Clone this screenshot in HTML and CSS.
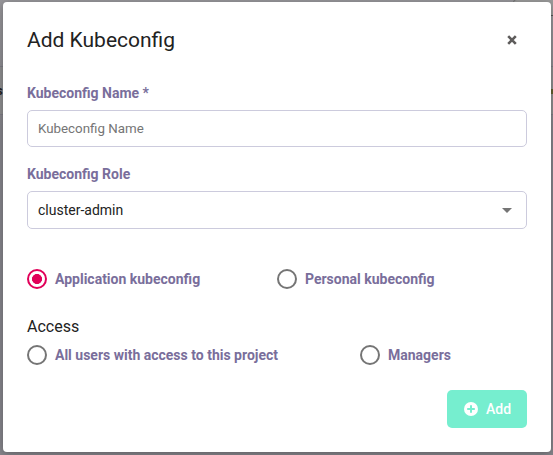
FILE: index.html
```
<!DOCTYPE html>
<html lang="en">
<head>
<meta charset="utf-8">
<title>Add Kubeconfig</title>
<link rel="stylesheet" href="styles.css">
</head>
<body>
<div class="backdrop">
  <span class="page-row"></span>
  <span class="page-card"></span>
  <span class="page-text">s</span>
  <span class="page-badge"></span>
</div>
<main class="modal" role="dialog" aria-labelledby="title">
  <header class="header">
    <h1 class="title" id="title">Add Kubeconfig</h1>
    <button class="close" type="button" aria-label="Close"><svg width="10" height="10" viewBox="0 0 10 10"><path d="M1.2 1.2 8.8 8.8M8.8 1.2 1.2 8.8" stroke="#5e5c5b" stroke-width="2.6"/></svg></button>
  </header>
  <label class="label" for="name">Kubeconfig Name *</label>
  <input class="control" id="name" type="text" placeholder="Kubeconfig Name">
  <div class="label role-label">Kubeconfig Role</div>
  <div class="control select"><span>cluster-admin</span><svg width="10" height="5" viewBox="0 0 10 5"><path d="M0 0h10L5 5z" fill="#757575"/></svg></div>
  <div class="options kind">
    <label class="option"><input class="radio" type="radio" name="kind" checked>Application kubeconfig</label>
    <label class="option"><input class="radio" type="radio" name="kind">Personal kubeconfig</label>
  </div>
  <h2 class="access-title">Access</h2>
  <div class="options access">
    <label class="option"><input class="radio" type="radio" name="access">All users with access to this project</label>
    <label class="option"><input class="radio" type="radio" name="access">Managers</label>
  </div>
  <footer class="footer">
    <button class="add" type="button"><svg width="14" height="14" viewBox="0 0 14 14"><circle cx="7" cy="7" r="7" fill="#fff"/><path d="M7 3.2v7.6M3.2 7h7.6" stroke="#76eecf" stroke-width="2"/></svg><span>Add</span></button>
  </footer>
</main>
</body>
</html>
```
FILE: styles.css
```
* { box-sizing: border-box; }
body {
  margin: 0;
  height: 455px;
  padding: 2px 2px 3px 3px;
  overflow: hidden;
  background: #8c8b91;
  font-family: Roboto, sans-serif;
  font-size: 14px;
  color: #222;
}
.backdrop {
  position: absolute;
  inset: 0;
  overflow: hidden;
  background: linear-gradient(#98979b, #87868c 130px);
}
.page-row {
  position: absolute;
  top: 66px;
  left: 0;
  right: 0;
  height: 49px;
  background: #8f8f90;
  border: solid #7f7e87;
  border-width: 1px 0;
}
.page-card {
  position: absolute;
  top: -1px;
  left: 513px;
  width: 50px;
  height: 17px;
  background: #9b9b9b;
  border: 1px solid #777;
  border-bottom-color: #555;
  border-radius: 4px 0 0 0;
}
.page-text {
  position: absolute;
  top: 83px;
  left: -4px;
  font-size: 13px;
  font-weight: 700;
}
.page-badge {
  position: absolute;
  top: 89px;
  left: 551px;
  width: 5px;
  height: 5px;
  background: #62602f;
}
.modal {
  position: relative;
  display: flex;
  flex-direction: column;
  height: 450px;
  padding: 0 24px;
  background: #fff;
  border-radius: 4px;
  box-shadow: 0 2px 10px rgba(0, 0, 0, .3);
}
.header {
  display: flex;
  align-items: center;
  justify-content: space-between;
  height: 76px;
}
.title {
  margin: 0;
  font-size: 21px;
  font-weight: 400;
}
.close {
  display: flex;
  padding: 0;
  margin-right: 10px;
  border: 0;
  background: none;
}
.label {
  height: 27px;
  margin-top: 5px;
  line-height: 20px;
  font-weight: 700;
  color: #796e9b;
}
.role-label { margin-top: 17px; }
.control {
  width: 100%;
  height: 37px;
  padding: 0 10px;
  border: 1px solid #cccbdd;
  border-radius: 5px;
  background: #fff;
  font: 400 13.333px Roboto, sans-serif;
  color: #222;
}
.control::placeholder { color: #757575; opacity: 1; }
.select {
  display: flex;
  align-items: center;
  justify-content: space-between;
  height: 38px;
  padding-right: 14px;
  font-size: 14px;
}
.options { display: grid; }
.kind {
  grid-template-columns: 250px 1fr;
  margin-top: 40px;
}
.access { grid-template-columns: 333px 1fr; }
.option {
  display: flex;
  align-items: center;
  gap: 8px;
  height: 20px;
  font-weight: 700;
  color: #796e9b;
}
.radio {
  appearance: none;
  width: 20px;
  height: 20px;
  margin: 0;
  border: 2px solid #757575;
  border-radius: 50%;
}
.radio:checked {
  border-color: #e10059;
  background: radial-gradient(circle, #e10059 4.7px, transparent 5.3px);
}
.access-title {
  margin: 28px 0 8px;
  font-size: 16px;
  line-height: 20px;
  font-weight: 400;
}
.footer {
  display: flex;
  justify-content: flex-end;
  margin-top: 25px;
}
.add {
  display: flex;
  align-items: center;
  justify-content: center;
  gap: 8px;
  width: 80px;
  height: 38px;
  padding: 0 0 0 1px;
  border: 0;
  border-radius: 5px;
  background: #76eecf;
  font: 500 14px Roboto, sans-serif;
  color: #fff;
}
```
